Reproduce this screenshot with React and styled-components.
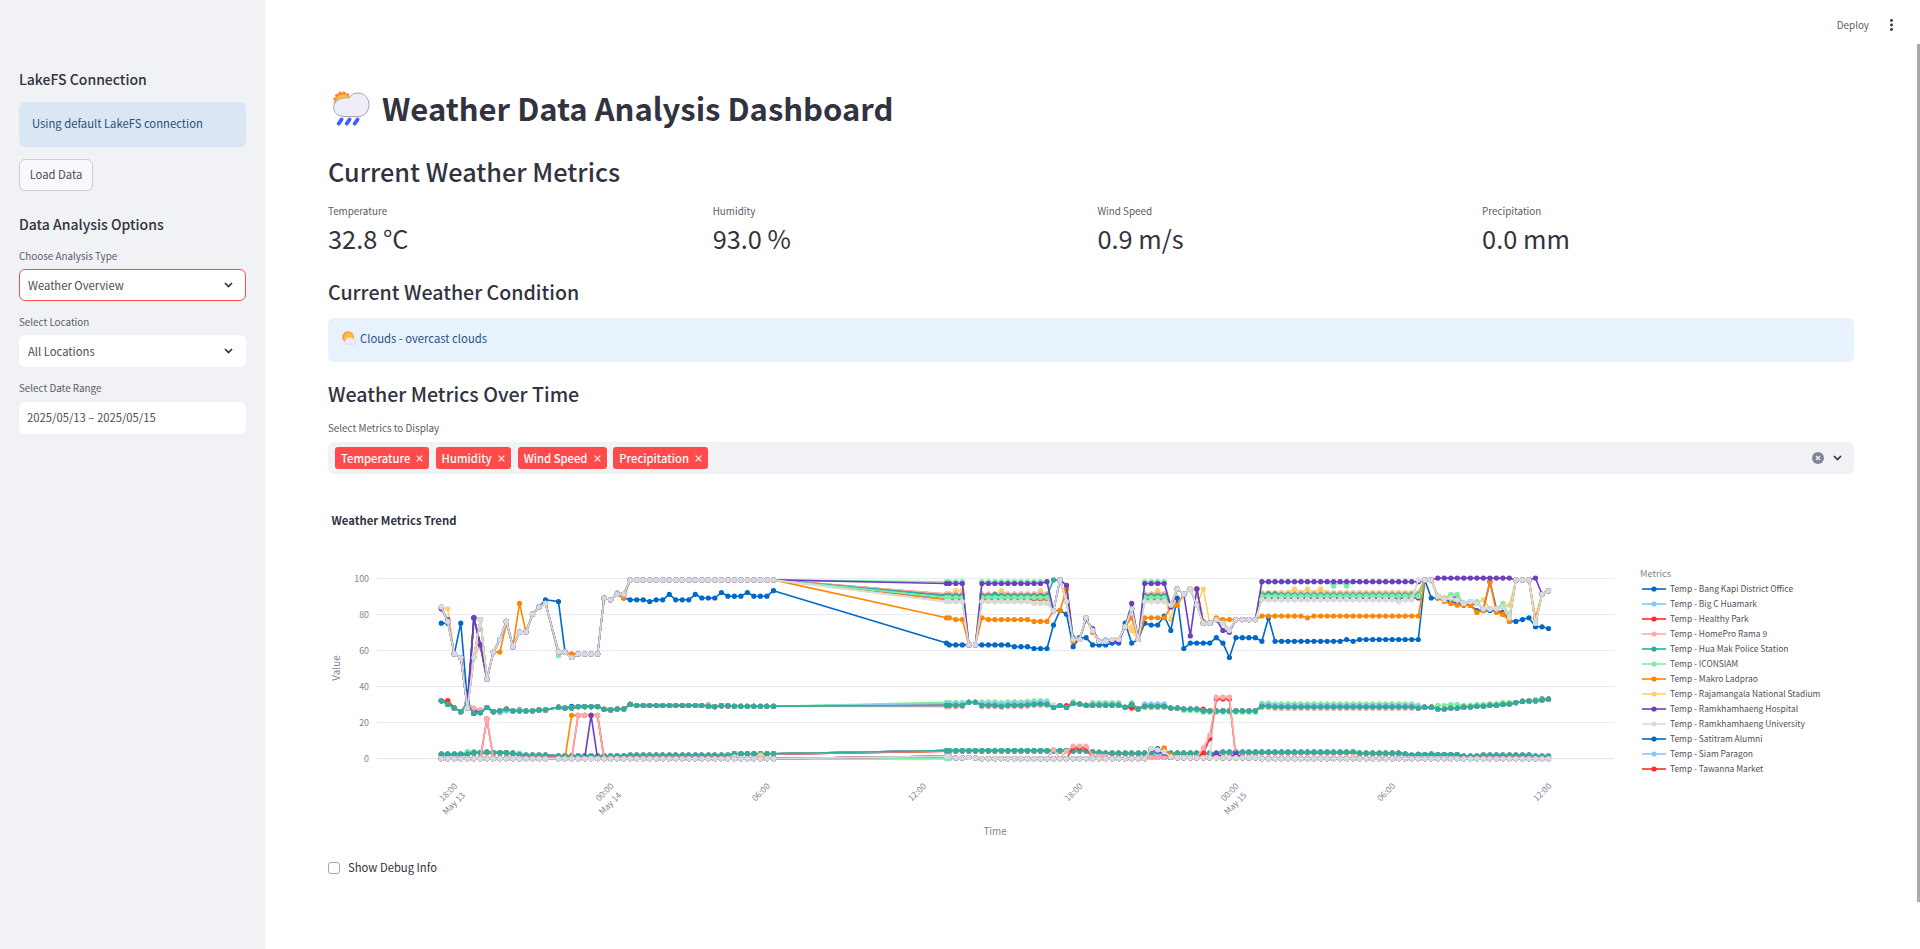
import React from "react";
import styled, { createGlobalStyle } from "styled-components";

const Global = createGlobalStyle`
  * { box-sizing: border-box; }
  body {
    margin: 0;
    background: #fff;
    color: #31333f;
    font-family: "Noto Sans CJK SC", "Open Sans", sans-serif;
    font-size: 11.28px;
    overflow: hidden;
  }
  #root { font-kerning: normal; }
`;

const Page = styled.div`
  display: flex;
  width: 1920px;
  height: 949px;
  overflow: hidden;
`;
const Sidebar = styled.aside`
  width: 265px;
  height: 949px;
  flex: none;
  background: #f0f2f6;
  padding: 69px 19px 0;
  display: flex;
  flex-direction: column;
`;
const SideHeading = styled.h3`
  margin: ${(p) => p.$top || 0}px 0 0;
  font-size: 14px;
  font-weight: 500;
  line-height: 20px;
  height: 20px;
`;
const Alert = styled.div`
  display: flex;
  align-items: center;
  gap: 4px;
  height: ${(p) => (p.$side ? 45 : 44)}px;
  margin-top: ${(p) => p.$top}px;
  padding: 0 0 ${(p) => (p.$side ? 3 : 4)}px ${(p) => (p.$side ? 13 : 14)}px;
  border-radius: 6px;
  color: #26527c;
  background: ${(p) => (p.$side ? "#dae6f4" : "#e8f2fc")};
`;
const Button = styled.button`
  width: 74px;
  height: 32px;
  margin-top: 12px;
  padding: 0 0 2px;
  font: inherit;
  color: #4b4d57;
  background: #f9f9fb;
  border: 1px solid #cccdd3;
  border-radius: 6px;
`;
const Label = styled.div`
  height: 16px;
  line-height: 16px;
  margin-top: ${(p) => p.$top || 0}px;
  font-size: 9.85px;
  color: #5a5c66;
`;
const Field = styled.div`
  display: flex;
  align-items: center;
  justify-content: space-between;
  height: 32px;
  margin-top: ${(p) => p.$top || 4}px;
  padding: 0 12px ${(p) => p.$lift || 0}px ${(p) => p.$pad || 8}px;
  border: 1px solid ${(p) => (p.$active ? "#ff4b4b" : "#fff")};
  border-radius: 6px;
  background: #fff;
  color: #4b4d57;
`;
const Main = styled.main`
  flex: 1;
  display: flex;
  flex-direction: column;
  padding-left: 63px;
`;
const Header = styled.header`
  height: 44px;
  display: flex;
  align-items: center;
  justify-content: flex-end;
  gap: 21px;
  padding: 5px 25px 0 0;
  font-size: 9.85px;
  color: #5a5c66;
`;
const Body = styled.div`
  width: 1526px;
  display: flex;
  flex-direction: column;
`;
const Title = styled.h1`
  display: flex;
  align-items: center;
  gap: 12px;
  height: 44px;
  margin: 42px 0 0;
  padding-left: 4px;
  font-size: 31px;
  line-height: 44px;
  font-weight: 700;
  color: #31333f;
  svg { margin-top: 2px; }
`;
const Heading = styled.h2`
  height: ${(p) => p.$h}px;
  line-height: ${(p) => p.$h}px;
  margin: ${(p) => p.$top}px 0 0;
  font-size: ${(p) => p.$size}px;
  font-weight: 500;
`;
const MetricRow = styled.div`
  display: grid;
  grid-template-columns: repeat(4, 1fr);
  column-gap: 12.8px;
  margin-top: 13px;
`;
const MetricValue = styled.div`
  height: 40px;
  line-height: 39px;
  font-size: 25.35px;
`;
const Multi = styled.div`
  display: flex;
  align-items: center;
  height: 32px;
  margin-top: 6px;
  padding: 0 12px 0 7px;
  border-radius: 6px;
  background: #f0f2f6;
`;
const Tag = styled.div`
  display: flex;
  align-items: center;
  justify-content: space-between;
  width: ${(p) => p.$w}px;
  height: 22px;
  margin-right: 6.6px;
  padding: 0 6px 0 6px;
  border-radius: 3px;
  background: #ff4b4b;
  color: #fff;
  font-weight: 500;
  line-height: 20px;
`;
const Spacer = styled.div`
  flex: 1;
`;
const MultiIcons = styled.div`
  display: flex;
  align-items: center;
  gap: 9px;
`;
const PlotTitle = styled.div`
  margin: 35px 0 0 3.5px;
  height: 22px;
  line-height: 22px;
  font-size: 11.3px;
  font-weight: 700;
`;
const PlotRow = styled.div`
  display: flex;
  height: 320px;
`;
const PlotSvg = styled.svg`
  display: block;
  flex: none;
`;
const Legend = styled.div`
  margin: 35px 0 0 16px;
  font-size: 8.44px;
  color: #808495;
`;
const LegendTitle = styled.div`
  height: 15px;
  line-height: 14px;
  margin-left: -2px;
  font-size: 9.2px;
`;
const LegendItem = styled.div`
  display: flex;
  align-items: center;
  gap: 4px;
  height: 15px;
  line-height: 15px;
  white-space: nowrap;
  color: #4f515c;
`;
const CheckRow = styled.label`
  display: flex;
  align-items: center;
  gap: 8px;
  margin-top: 6px;
  height: 20px;
`;
const Box = styled.span`
  width: 12px;
  height: 12px;
  margin-top: 2px;
  border: 1px solid #a6a8b2;
  border-radius: 3px;
  background: #fff;
`;
const Scrollbar = styled.div`
  position: absolute;
  right: 0;
  top: 44px;
  width: 3px;
  height: 858px;
  background: #a9a9af;
`;

const Chevron = () => (
  <svg width="9" height="6" viewBox="0 0 9 6" fill="none">
    <path d="M1 1l3.5 3.5L8 1" stroke="#31333f" strokeWidth="1.7" />
  </svg>
);
const Cross = () => (
  <svg width="7" height="7" viewBox="0 0 7 7">
    <path d="M0.7 0.7l5.6 5.6M6.3 0.7l-5.6 5.6" stroke="#fff" strokeWidth="1.1" />
  </svg>
);
const ClearAll = () => (
  <svg width="12" height="12" viewBox="0 0 12 12">
    <circle cx="6" cy="6" r="6" fill="#808495" />
    <path d="M4 4l4 4M8 4l-4 4" stroke="#f0f2f6" strokeWidth="1.4" />
  </svg>
);
const Dots = () => (
  <svg width="3" height="12" viewBox="0 0 3 12" style={{ marginRight: 2 }} fill="#31333f">
    <circle cx="1.5" cy="1.5" r="1.4" />
    <circle cx="1.5" cy="6" r="1.4" />
    <circle cx="1.5" cy="10.5" r="1.4" />
  </svg>
);
const RainCloud = () => (
  <svg width="38" height="36" viewBox="0 0 38 36">
    <circle cx="10.500" cy="9.500" r="7.800" fill="#ff822d" />
    <circle cx="10.500" cy="9.500" r="7.800" fill="none" stroke="#ff822d" strokeWidth="2.600" strokeDasharray="2.700 1.380" />
    <circle cx="11" cy="10.500" r="7.300" fill="#fcc03a" />
    <path
      d="M13 25.500h14C32.500 25.500 37 20 37 13.500S32 2 26 2c-4 0-7.200 1.800-9 5C8.300 6 1.600 10 1.600 16.500c0 5.500 4.900 9 11.400 9z"
      fill="#f1edf7"
      stroke="#a9a1b2"
      strokeWidth="1"
    />
    <path d="M9.500 28.500L6.800 32.500M17.500 28.500L14.800 32.500M25.500 28.500L22.800 32.500" stroke="#3f5fff" strokeWidth="4" strokeLinecap="round" />
  </svg>
);
const SunCloud = () => (
  <svg width="14" height="14" viewBox="0 0 14 14">
    <circle cx="6" cy="6" r="5" fill="#ff8a30" />
    <circle cx="6" cy="6" r="5.200" fill="none" stroke="#ff8a30" strokeWidth="1.400" strokeDasharray="2 0.720" />
    <circle cx="6.300" cy="6.300" r="4.500" fill="#fcc03a" />
    <path d="M5 13.300h6.300a2.400 2.400 0 0 0 .6-4.700 2.300 2.300 0 0 0-2.900-1.500A3 3 0 0 0 4.300 8.400 2.500 2.500 0 0 0 5 13.300z" fill="#f0eaf6" stroke="#d5cbdd" strokeWidth=".5" />
  </svg>
);

const COLORS = ["#0068c9", "#83c9ff", "#ff2b2b", "#ffabab", "#29b09d", "#7defa1", "#ff8700", "#ffd16a", "#6d3fc0", "#d5dae5"];

/* Readings arrive every 15 minutes; slots are counted from May 13 17:30. */
const SLOTS = [];
for (let i = 0; i <= 51; i++) if (i !== 17) SLOTS.push(i);
SLOTS.push(77.55);
for (let i = 78; i <= 170; i++) SLOTS.push(i);

/* "start-end:value" and "start:value,value,..." entries, joined by spaces. */
const parse = (spec) => {
  const map = {};
  spec.trim().split(/\s+/).forEach((entry) => {
    const [range, vals] = entry.split(":");
    if (range.includes("-")) {
      const [a, b] = range.split("-").map(Number);
      SLOTS.forEach((s) => {
        if (s >= a && s <= b) map[s] = Number(vals);
      });
    } else {
      vals.split(",").forEach((v, k) => {
        map[Number(range) + k] = Number(v);
      });
    }
  });
  return map;
};
const vary = (base, spec) => ({ ...base, ...parse(spec) });
const shift = (base, ranges) => {
  const out = { ...base };
  ranges.forEach(([a, b, d]) => SLOTS.forEach((s) => {
    if (s >= a && s <= b) out[s] += d;
  }));
  return out;
};

const tempBase = parse(`0:32,30,28,26,30.500,25,25.500,28.300,26,26.500,27.500,26.500,26.500,26.500,26.500,27,27
  18:28.500,28,28 21-24:28.800 25:27.300,27,27.400,27.400,30 30-44:29.400 41:29,28.800,29.300,29.300 45-51:29 77-80:29.400
  81:31.200,31.200,29.400,29.400,29.400,29,29.400,29.500,29.400,29.700,30,30.200,30 94:28.300,29.400,28.300,30.500,30.200,29.500
  100-104:29.600 105:28.400,30,27.500 108-111:28.900 112:28,28,27.400,27.400,27.400 117-125:26.500 126:29,29 128-149:28.600
  150:28,28.500,28.500,27.500,27.400,28,28,28.500,28.600,29,29,29.500,29.500,30,30.200,31,31.700,31.900,32,32.500,33`);
const T_HI = [[77, 80, 1.8], [83, 93, 2], [97, 97, 1], [100, 104, 1.4], [106, 106, 1], [114, 125, -0.8], [126, 150, 1.7], [153, 156, 2], [157, 164, 1], [168, 168, 0.8]];
const T_MID = [[12, 12, 1], [9, 10, -1], [77, 80, 1], [83, 93, 1.1], [100, 104, 0.6], [108, 111, 1.3], [126, 150, 0.9]];
const T_LOW = [[77, 80, -0.7], [83, 93, -0.7], [108, 111, -0.7], [126, 149, -0.8]];
const temps = [
  shift(tempBase, [[20, 20, 1]]), shift(tempBase, T_MID), vary(tempBase, "1:32 117:27.5 106:28"),
  vary(tempBase, "5:28,27 41:30"), tempBase, shift(tempBase, T_HI), tempBase,
  tempBase, vary(tempBase, "4:31,27"), vary(tempBase, "94:30 4:32"), shift(tempBase, [[169, 169, 0.6]]),
  shift(tempBase, T_MID), vary(tempBase, "1:32 96:29.3"), vary(shift(tempBase, T_LOW), "5:28,27"), tempBase,
];

const humBase = parse(`0:84,76,58,56,28,56,77,44,59,66,76,62,70,70,80,84,86 18:59,59,56 21-24:58 25:89,88,91,91 29-51:99
  77-80:87 81:63,63 83-90:87 91-93:86 94:82,99,87,66,66,78,71,65,65,66,66,73,83,66 108-111:87
  112:85,94,91,94,85,75,75,77,75,71 122-125:77 126-149:88 147:87 150:99,99,99,90,88,89,88,86,87,86,83,83,83,84,78,99,99,99,75,91,93`);
const band = (v, w, extra = "") =>
  vary(humBase, `77-80:${v} 83-93:${v} 108-111:${v} 126-150:${w} ${extra}`);
const hums = [
  band(98, 98, "18:57 27:92 6:77 137:95.5 139:95.5 155:90"),
  band(88, 90, "5:78,62 116:94"),
  band(91, 92, "1:83 79:93,93 86:93 92:93 106:71 110:93 112:77 117:94 131:94 133:94 135:94 160:88 164:85"),
  band(89, 89, "5:78,63 116:94 154:89,90,89 161:98"),
  band(90, 90),
  vary(humBase, `0:75,75,58,75,32,78,63 16:88 18:87 28:89,88,88,88,87,88,88,91,88,88,88,91,89,89,89,92,90,90,90,92,90,90,90,93
    77-78:64 78-87:63 88-90:62 91-93:61 94:74,82,80,62,67,67,63,63,63,64,64,75,64,66,75,74,74,79,71,89,61
    115-118:64 119:67,64,56,67,67,67,67,65,78 128-138:65 139:66,65 141-150:66 151:99,89,89,88,87,86,85,85,82,82,82,82,81,76,76,77,78,73,73,72`),
  band(90, 91, "102:66"),
  band(91, 91.3, "158:85 163:80"),
  band(91.3, 91.7, "5:56,63"),
  band(90.3, 90.7, "85:91 94:99 96:96 97:67 127:91.3,91.3"),
  band(89.2, 90, "6:77 155:91,91 159:87 163:86,79 168:76"),
  vary(humBase, `0:83 9:59,75,62,86,70 20:58 28:89 77-78:78 79:77,77 83:78 84-90:77 91-93:76 95:82,94,65,66,78,70 106:78
    108-111:78 112:84,85 116:94,76 119:78,77,77 126-150:79 133:78 153:89,87,86,85,85,85,81,82,98,81,80,76 168:78`),
  vary(humBase, "106:73 116:94 154:89,89"),
  vary(humBase, `0:83,77 5:78,63 77-80:97 83-92:97 93:98 96:96 99:77,72 103:65,65 106:86 108-111:97 112:84 115:68,94
    120:71,70 126-150:98 153-164:100 168:100`),
  humBase,
];

const windBase = parse(`0-4:2.500 5-10:3.300 7:3.600 11:3,2.200 13-16:2 18-28:1.500 29-44:2 45-51:2.700 77-99:4.500
  100:3.700,3.500 102-119:3.100 109:3.3,3.3 112:3 120-140:3.600 141-147:3.100 148:2.500,2,2.300 151-156:2.200 157-159:1.400 160-167:1.900 168-170:1.300`);
const winds = [];
for (let k = 0; k < 15; k++) {
  winds.push(k === 14 ? windBase : shift(windBase, [[0, 170, ((k * 7) % 5) * -0.08]]));
}
winds[0] = vary(windBase, "152:2.6 156:2.2");
winds[1] = vary(windBase, "12:3 108:3,2.5,3,1.5 168-170:1.8");
winds[3] = vary(windBase, "4:3.6");
winds[5] = vary(windBase, "4:4,4 120-125:3.2 140:4");

const rainBase = parse("0-170:0 77-78:1.2 79-170:0.3 83-108:0 81:0.6 109-112:0.6 113-125:0.5 126-170:0");
const rain = (extra) => vary(rainBase, extra);
const CLUSTER = "109:5.5,4.7,3.7,0.8";
const rains = [
  rain("77-78:0"), rain("20-24:24 77-80:0.3 111:6"), rain("49:2 45:1 140:1"), rain("108:0"), rain("7:22 119-121:34"),
  rain("110:5.5 109:5"), rain("110:3,1.5"), rain("7:22 21-24:24 97-99:6 117:3,11,33,33,33"),
  rain("7:22 21-24:24 94:5 96:4 97-99:7 100:1.5,1.3,1.2 117:6,13,34,34,34"),
  rain(CLUSTER), rain(`77-78:0 ${CLUSTER}`), rain("109:5,4.5,5.5,2"), rain(`79:0.3 ${CLUSTER}`), rain("23:24 108:0 109:5,4,3 119:2.8 122:2.8"),
  rain(CLUSTER),
];

const SERIES = [...temps, ...hums, ...winds, ...rains];
const ZERO = 214.2;
const px = (s) => 113.3 + s * 6.513;
const py = (v) => ZERO - v * 1.805;
const TICKS = [
  [2, "18:00", "May 13"], [26, "00:00", "May 14"], [50, "06:00"], [74, "12:00"],
  [98, "18:00"], [122, "00:00", "May 15"], [146, "06:00"], [170, "12:00"],
];

const Series = ({ data, color }) => {
  const pts = SLOTS.filter((s) => data[s] !== undefined).map((s) => [px(s).toFixed(1), py(data[s]).toFixed(1)]);
  return (
    <g stroke={color} fill="none">
      <path d={"M" + pts.map((p) => p.join(" ")).join("L")} strokeWidth="1.6" strokeLinejoin="round" />
      <path d={pts.map((p) => `M${p[0]} ${p[1]}h.01`).join("")} strokeWidth="5.2" strokeLinecap="round" />
    </g>
  );
};

const Chart = () => (
  <PlotSvg width="1298" height="320" viewBox="0 -13.4 1298 320">
    {[0, 20, 40, 60, 80, 100].map((v) => (
      <g key={v}>
        <path d={`M48 ${Math.round(py(v)) + 0.1}H1286`} stroke={v ? "#e9ebf3" : "#e3e6ee"} />
        <text x="41" y={py(v) + 3.8} textAnchor="end" fontSize="8.9" fill="#808495">{v}</text>
      </g>
    ))}
    {SERIES.map((data, k) => (
      <Series key={k} data={data} color={COLORS[k % 10]} />
    ))}
    {TICKS.map(([s, time, day]) => (
      <g key={s} transform={`translate(${px(s)} 241.6) rotate(-45)`} textAnchor="end" fontSize="8.5" fill="#808495">
        <text x="2" y="3">{time}</text>
        {day && <text x="1" y="15">{day}</text>}
      </g>
    ))}
    <text transform="translate(12 123.6) rotate(-90)" textAnchor="middle" fontSize="9.9" fill="#808495">Value</text>
    <text x="667" y="290.6" textAnchor="middle" fontSize="9.9" fill="#808495">Time</text>
  </PlotSvg>
);

const STATIONS = [
  "Bang Kapi District Office", "Big C Huamark", "Healthy Park", "HomePro Rama 9", "Hua Mak Police Station", "ICONSIAM",
  "Makro Ladprao", "Rajamangala National Stadium", "Ramkhamhaeng Hospital", "Ramkhamhaeng University",
  "Satitram Alumni", "Siam Paragon", "Tawanna Market",
];
const METRICS = [["Temperature", "32.8 °C"], ["Humidity", "93.0 %"], ["Wind Speed", "0.9 m/s"], ["Precipitation", "0.0 mm"]];
const TAGS = [["Temperature", 94], ["Humidity", 75.5], ["Wind Speed", 89], ["Precipitation", 95]];

export default function App() {
  return (
    <Page>
      <Global />
      <Sidebar>
        <SideHeading>LakeFS Connection</SideHeading>
        <Alert $side $top={13}>Using default LakeFS connection</Alert>
        <Button>Load Data</Button>
        <SideHeading $top={23}>Data Analysis Options</SideHeading>
        <Label $top={14}>Choose Analysis Type</Label>
        <Field $active $top={5}>Weather Overview<Chevron /></Field>
        <Label $top={13}>Select Location</Label>
        <Field $top={5}>All Locations<Chevron /></Field>
        <Label $top={13}>Select Date Range</Label>
        <Field $top={6} $pad={7} $lift={2}>2025/05/13 – 2025/05/15</Field>
      </Sidebar>
      <Main>
        <Header>Deploy<Dots /></Header>
        <Body>
          <Title><RainCloud />Weather Data Analysis Dashboard</Title>
          <Heading $top={22} $h={38} $size={25.25}>Current Weather Metrics</Heading>
          <MetricRow>
            {METRICS.map(([name, value]) => (
              <div key={name}>
                <Label>{name}</Label>
                <MetricValue>{value}</MetricValue>
              </div>
            ))}
          </MetricRow>
          <Heading $top={18} $h={30} $size={19.6}>Current Weather Condition</Heading>
          <Alert $top={11}><SunCloud />Clouds - overcast clouds</Alert>
          <Heading $top={17} $h={30} $size={19.6}>Weather Metrics Over Time</Heading>
          <Label $top={11}>Select Metrics to Display</Label>
          <Multi>
            {TAGS.map(([name, w]) => (
              <Tag key={name} $w={w}>{name}<Cross /></Tag>
            ))}
            <Spacer />
            <MultiIcons><ClearAll /><Chevron /></MultiIcons>
          </Multi>
          <PlotTitle>Weather Metrics Trend</PlotTitle>
          <PlotRow>
            <Chart />
            <Legend>
              <LegendTitle>Metrics</LegendTitle>
              {STATIONS.map((name, k) => (
                <LegendItem key={name}>
                  <svg width="24" height="6" viewBox="0 0 24 6">
                    <path d="M0 3h24" stroke={COLORS[k % 10]} strokeWidth="1.6" />
                    <circle cx="12" cy="3" r="2.6" fill={COLORS[k % 10]} />
                  </svg>
                  Temp - {name}
                </LegendItem>
              ))}
            </Legend>
          </PlotRow>
          <CheckRow><Box />Show Debug Info</CheckRow>
        </Body>
      </Main>
      <Scrollbar />
    </Page>
  );
}
